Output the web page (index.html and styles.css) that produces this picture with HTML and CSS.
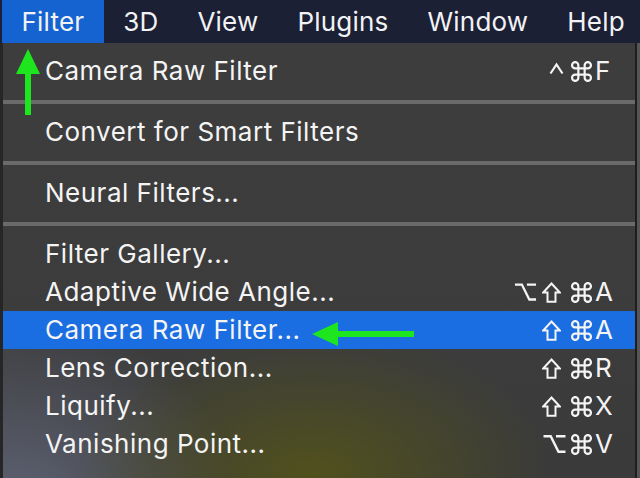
FILE: index.html
```html
<!DOCTYPE html>
<html lang="en">
<head>
<meta charset="utf-8">
<title>Filter menu</title>
<link rel="stylesheet" href="styles.css">
</head>
<body>
<div class="screen">
  <nav class="menubar">
    <span class="mb-item active">Filter</span>
    <span class="mb-item">3D</span>
    <span class="mb-item">View</span>
    <span class="mb-item">Plugins</span>
    <span class="mb-item">Window</span>
    <span class="mb-item">Help</span>
  </nav>
  <div class="menu">
    <div class="item"><span class="label">Camera Raw Filter</span><span class="keys">
      <svg class="k k-ctrl" viewBox="0 0 15 20"><path d="M1.5 12.5 L7.5 3.5 L13.5 12.5"/></svg>
      <svg class="k k-cmd" viewBox="2 2 20 20"><path d="M15 6v12a3 3 0 1 0 3-3H6a3 3 0 1 0 3 3V6a3 3 0 1 0-3 3h12a3 3 0 1 0-3-3"/></svg>
      <span class="letter">F</span></span></div>
    <div class="sep"></div>
    <div class="item"><span class="label">Convert for Smart Filters</span></div>
    <div class="sep"></div>
    <div class="item"><span class="label">Neural Filters...</span></div>
    <div class="sep"></div>
    <div class="item"><span class="label">Filter Gallery...</span></div>
    <div class="item"><span class="label">Adaptive Wide Angle...</span><span class="keys">
      <svg class="k k-opt" viewBox="0 0 24 20"><path d="M1 2.2 H8.2 L16 17.8 H23 M13.5 2.2 H23"/></svg>
      <svg class="k k-shift" viewBox="0 0 19 21"><path d="M9.5 1.5 L17.8 10.5 H13.5 V19.8 H5.5 V10.5 H1.2 Z"/></svg>
      <svg class="k k-cmd" viewBox="2 2 20 20"><path d="M15 6v12a3 3 0 1 0 3-3H6a3 3 0 1 0 3 3V6a3 3 0 1 0-3 3h12a3 3 0 1 0-3-3"/></svg>
      <span class="letter">A</span></span></div>
    <div class="item selected"><span class="label">Camera Raw Filter...</span><span class="keys">
      <svg class="k k-shift" viewBox="0 0 19 21"><path d="M9.5 1.5 L17.8 10.5 H13.5 V19.8 H5.5 V10.5 H1.2 Z"/></svg>
      <svg class="k k-cmd" viewBox="2 2 20 20"><path d="M15 6v12a3 3 0 1 0 3-3H6a3 3 0 1 0 3 3V6a3 3 0 1 0-3 3h12a3 3 0 1 0-3-3"/></svg>
      <span class="letter">A</span></span></div>
    <div class="item"><span class="label">Lens Correction...</span><span class="keys">
      <svg class="k k-shift" viewBox="0 0 19 21"><path d="M9.5 1.5 L17.8 10.5 H13.5 V19.8 H5.5 V10.5 H1.2 Z"/></svg>
      <svg class="k k-cmd" viewBox="2 2 20 20"><path d="M15 6v12a3 3 0 1 0 3-3H6a3 3 0 1 0 3 3V6a3 3 0 1 0-3 3h12a3 3 0 1 0-3-3"/></svg>
      <span class="letter">R</span></span></div>
    <div class="item"><span class="label">Liquify...</span><span class="keys">
      <svg class="k k-shift" viewBox="0 0 19 21"><path d="M9.5 1.5 L17.8 10.5 H13.5 V19.8 H5.5 V10.5 H1.2 Z"/></svg>
      <svg class="k k-cmd" viewBox="2 2 20 20"><path d="M15 6v12a3 3 0 1 0 3-3H6a3 3 0 1 0 3 3V6a3 3 0 1 0-3 3h12a3 3 0 1 0-3-3"/></svg>
      <span class="letter">X</span></span></div>
    <div class="item"><span class="label">Vanishing Point...</span><span class="keys">
      <svg class="k k-opt k-opt-wide" viewBox="0 0 24 20"><path d="M1 2.2 H8.2 L16 17.8 H23 M13.5 2.2 H23"/></svg>
      <svg class="k k-cmd" viewBox="2 2 20 20"><path d="M15 6v12a3 3 0 1 0 3-3H6a3 3 0 1 0 3 3V6a3 3 0 1 0-3 3h12a3 3 0 1 0-3-3"/></svg>
      <span class="letter">V</span></span></div>
  </div>
  <svg class="arrow arrow-up" width="30" height="70" viewBox="0 0 30 70">
    <polygon points="13,0 25,25 16,25 16,66 10,66 10,25 1,25" fill="#1ee61e"/>
  </svg>
  <svg class="arrow arrow-left" width="110" height="30" viewBox="0 0 110 30">
    <polygon points="0,13 26,1 26,10 102,10 102,16 26,16 26,25" fill="#1ee61e"/>
  </svg>
</div>
</body>
</html>
```
FILE: styles.css
```css
* { box-sizing: border-box; }
html, body { margin: 0; padding: 0; }
body {
  background: #2a2a2a;
  font-family: "Inter", "DejaVu Sans", sans-serif;
  color: #f4f4f4;
}
.screen {
  position: relative;
  width: 640px;
  height: 478px;
  overflow: hidden;
  background: linear-gradient(to right, #262626 0 3px, #3a3a3a 3px 635px, #1e1e1e 635px 637px, #555 637px);
}
.menubar {
  display: flex;
  height: 43px;
  padding-left: 2px;
  background: #1b2035;
  font-size: 26px;
  letter-spacing: 0.2px;
  line-height: 43px;
}
.mb-item {
  padding: 0 19.5px;
  color: #f2f2f4;
}
.mb-item.active {
  background: #1563d1;
}
.menu {
  margin-left: 3px;
  width: 632px;
  height: 435px;
  padding-top: 9px;
  background:
    radial-gradient(ellipse 240px 140px at 310px 430px, rgba(82, 82, 28, 0.95), rgba(82, 82, 28, 0) 100%),
    radial-gradient(ellipse 230px 210px at 10px 475px, rgba(98, 103, 122, 0.95), rgba(98, 103, 122, 0) 100%),
    linear-gradient(to bottom, #3d3d3d, #3c3c3c 70%, #3a3a3a);
  font-size: 26px;
  letter-spacing: 0.5px;
}
.item {
  display: flex;
  justify-content: space-between;
  align-items: center;
  height: 38px;
  line-height: 38px;
  padding: 0 18px 0 42px;
  white-space: nowrap;
}
.item.selected {
  background: #1a6ee2;
}
.keys {
  display: flex;
  align-items: center;
}
.k {
  display: block;
  height: 20px;
  fill: none;
  stroke: #f4f4f4;
  stroke-width: 2.3;
  stroke-linecap: butt;
  stroke-linejoin: miter;
}
.k-ctrl { width: 15px; margin-right: 6px; stroke-width: 2.2; }
.k-cmd { width: 23px; height: 21px; margin-right: 2px; stroke-width: 2.1; }
.k-shift { width: 19px; height: 21px; margin-right: 9px; stroke-width: 2; }
.k-opt { width: 23px; margin-right: 5px; stroke-width: 2.4; }
.k-opt-wide { width: 25px; margin-right: 3px; }
.letter {
  width: 22px;
  letter-spacing: 0;
}
.sep {
  height: 4px;
  margin: 10px 0 9px;
  background: #6a6a6a;
}
.arrow {
  position: absolute;
}
.arrow-up { left: 15px; top: 49px; }
.arrow-left { left: 312px; top: 321px; }
```
